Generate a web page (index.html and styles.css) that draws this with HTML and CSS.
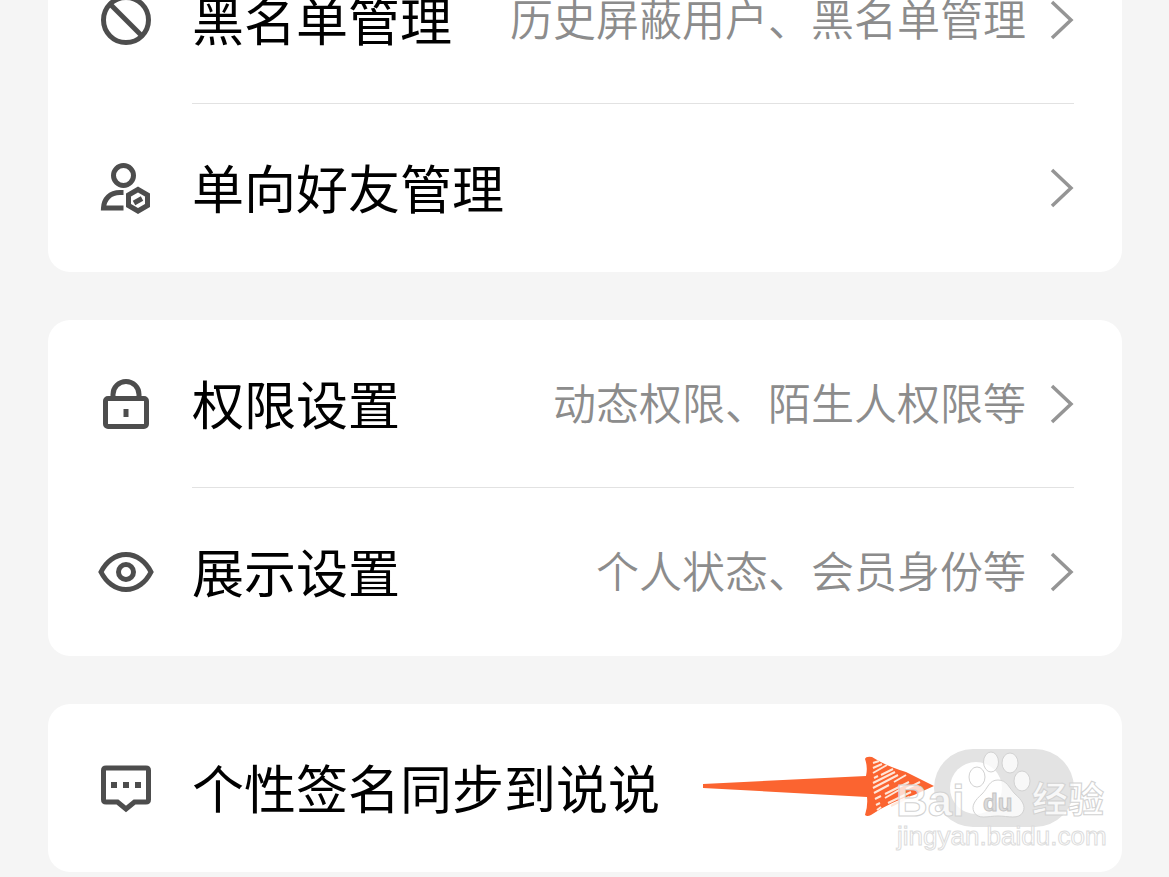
FILE: index.html
```html
<!DOCTYPE html>
<html lang="zh-CN">
<head>
    <meta charset="UTF-8">
    <meta name="viewport" content="width=device-width, initial-scale=1.0">
    <title>权限设置</title>
    <link rel="stylesheet" href="styles.css">
</head>
<body>
    <main class="settings">
        <section class="card">
            <a class="row" href="#blacklist">
                <svg class="icon" viewBox="0 0 60 60">
                    <circle cx="30" cy="30" r="22.5"/>
                    <path d="M14.5 14.5 45.5 45.5"/>
                </svg>
                <span class="row-body">
                    <span class="title">黑名单管理</span>
                    <span class="detail">历史屏蔽用户、黑名单管理</span>
                    <svg class="chevron" viewBox="0 0 24 40"><path d="M2 2 21 20 2 38"/></svg>
                </span>
            </a>
            <a class="row" href="#one-way">
                <svg class="icon" viewBox="0 0 60 60">
                    <circle cx="27.5" cy="17.5" r="10"/>
                    <path d="M27.5 34.5H24C14 34.5 8 41 7.5 50H27.5"/>
                    <path d="M42 31.5 51.5 37V47.5L42 53 32.5 47.5V37Z"/>
                    <path d="M38 45 46 40.5"/>
                </svg>
                <span class="row-body">
                    <span class="title">单向好友管理</span>
                    <svg class="chevron" viewBox="0 0 24 40"><path d="M2 2 21 20 2 38"/></svg>
                </span>
            </a>
        </section>

        <section class="card">
            <a class="row" href="#permission">
                <svg class="icon" viewBox="0 0 60 60">
                    <rect x="9.5" y="24.5" width="41" height="28" rx="2.5"/>
                    <path d="M17 24V20.5a13 13 0 0 1 26 0V24"/>
                    <path d="M30 35V43"/>
                </svg>
                <span class="row-body">
                    <span class="title">权限设置</span>
                    <span class="detail">动态权限、陌生人权限等</span>
                    <svg class="chevron" viewBox="0 0 24 40"><path d="M2 2 21 20 2 38"/></svg>
                </span>
            </a>
            <a class="row" href="#display">
                <svg class="icon" viewBox="0 0 60 60">
                    <path d="M5 30C10 20 19 12.5 30 12.5S50 20 55 30C50 40 41 47.5 30 47.5S10 40 5 30Z"/>
                    <circle cx="30" cy="30" r="7.5"/>
                </svg>
                <span class="row-body">
                    <span class="title">展示设置</span>
                    <span class="detail">个人状态、会员身份等</span>
                    <svg class="chevron" viewBox="0 0 24 40"><path d="M2 2 21 20 2 38"/></svg>
                </span>
            </a>
        </section>

        <section class="card">
            <div class="row">
                <svg class="icon" viewBox="0 0 60 60">
                    <path d="M10 10H50Q52.5 10 52.5 12.5V41.5Q52.5 44 50 44H38.5L30 51 21.5 44H10Q7.5 44 7.5 41.5V12.5Q7.5 10 10 10Z"/>
                    <path d="M15 27H21M27 27H33M39 27H45" stroke-width="6"/>
                </svg>
                <span class="row-body">
                    <label class="title" for="sync">个性签名同步到说说</label>
                    <input class="switch" type="checkbox" id="sync">
                </span>
            </div>

            <svg class="arrow" viewBox="0 0 232 64">
                <path class="arrow-fill" d="M0 29 163 21Q165 12 162 4 163 1 169 2 183 11 203 17L231 31 211 40Q189 46 168 60 164 62 162 60 165 51 164 42L0 33Z"/>
                <path class="arrow-hatch" d="M170 8 176 6M170 13 179 9M170 18 184 10M171 23 175 21M178 20 190 14M170 28 192 17M170 33 195 20M171 38 186 30M191 27 203 20M172 44 178 41M182 39 206 27M182 43 196 35M203 34 217 27M173 50 177 48M185 48 208 37M188 51 206 42M174 55 178 52"/>
            </svg>

            <svg class="watermark" viewBox="0 0 216 104">
                <ellipse cx="83" cy="28" rx="8" ry="10"/>
                <ellipse cx="97" cy="13" rx="7.5" ry="10"/>
                <ellipse cx="116" cy="14" rx="8" ry="10"/>
                <ellipse cx="128" cy="32" rx="8" ry="10"/>
                <path d="M104 31C113 31 115 39 121 45 128 51 132 57 129 63 125 71 114 67 104 67S84 71 80 63C77 57 81 51 88 45 94 39 95 31 104 31Z"/>
                <text class="wm-brand" x="2" y="67">Bai</text>
                <text class="wm-du" x="89" y="62">du</text>
                <text class="wm-cjk" x="138" y="64">经验</text>
                <text class="wm-url" x="3" y="96">jingyan.baidu.com</text>
            </svg>
        </section>
    </main>
</body>
</html>
```

FILE: styles.css
```css
* {
    margin: 0;
    padding: 0;
    box-sizing: border-box;
}

body {
    font-family: "Noto Sans CJK SC", sans-serif;
    background: #f5f5f5;
    color: #000;
    min-height: 100vh;
    overflow-x: hidden;
}

/* the list is scrolled part of the way into its first row */
.settings {
    margin-top: -64px;
    padding: 0 47px 0 48px;
    display: flex;
    flex-direction: column;
    gap: 48px;
}

.card {
    position: relative;
    background: #fff;
    border-radius: 22px;
    padding: 0 48px;
}

.row {
    display: flex;
    align-items: center;
    gap: 36px;
    color: inherit;
    text-decoration: none;
}

.row-body {
    flex: 1;
    min-width: 0;
    height: 168px;
    display: flex;
    align-items: center;
    gap: 24px;
    border-bottom: 1px solid #e2e2e2;
}

.row:last-of-type .row-body {
    border-bottom-color: transparent;
}

.icon {
    flex: none;
    width: 60px;
    height: 60px;
    fill: none;
    stroke: #4d4d4d;
    stroke-width: 5;
}

.title,
.detail {
    white-space: nowrap;
}

.title {
    flex: 1;
    padding-bottom: 2px;
    font-size: 52px;
    line-height: 76px;
}

.detail {
    padding-bottom: 6px;
    font-size: 43px;
    font-weight: 350;
    line-height: 64px;
    color: #8c8c8c;
}

.chevron {
    flex: none;
    width: 24px;
    height: 40px;
    fill: none;
    stroke: #959595;
    stroke-width: 3.5;
}

.switch {
    appearance: none;
    flex: none;
    width: 140px;
    height: 78px;
    padding: 13px 16px;
    border-radius: 39px;
    background: #e3e3e3;
}

.switch::before {
    content: "";
    display: block;
    width: 52px;
    height: 52px;
    border-radius: 50%;
    background: #fff;
}

.switch:checked {
    background: #0099ff;
}

.switch:checked::before {
    margin-left: auto;
}

.arrow {
    position: absolute;
    right: 187px;
    top: 51px;
    width: 232px;
    height: 64px;
    pointer-events: none;
}

.arrow-fill {
    fill: #fb6430;
}

.arrow-hatch {
    fill: none;
    stroke: #ffe6d8;
    stroke-width: 2;
}

.watermark {
    position: absolute;
    right: 12px;
    top: 45px;
    width: 216px;
    height: 104px;
    fill: rgba(255, 255, 255, 0.75);
    stroke: #d2d2d2;
    stroke-width: 1;
    pointer-events: none;
}

.watermark text {
    font-family: "Liberation Sans", "Noto Sans CJK SC", sans-serif;
}

.wm-brand {
    font-size: 44px;
    font-weight: bold;
}

.watermark .wm-du {
    font-size: 24px;
    font-weight: bold;
    fill: #dcdcdc;
    stroke: #c4c4c4;
}

.wm-cjk {
    font-size: 36px;
    font-weight: bold;
}

.wm-url {
    font-size: 26px;
    stroke: #dcdcdc;
}
```
